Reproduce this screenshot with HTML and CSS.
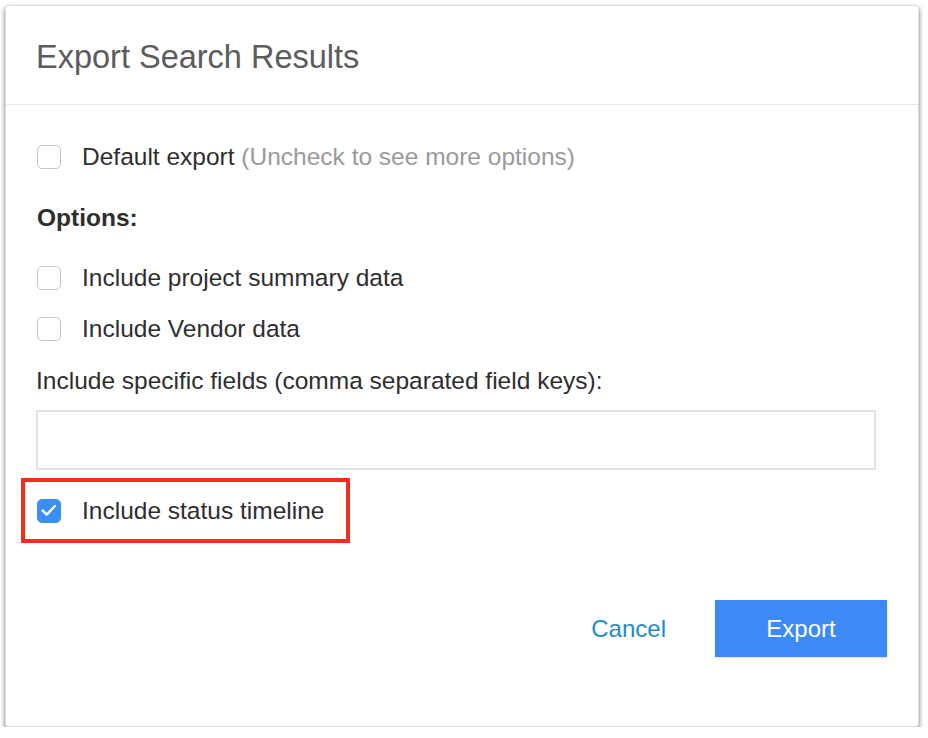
FILE: index.html
```html
<!DOCTYPE html>
<html lang="en">
<head>
    <meta charset="UTF-8">
    <title>Export Search Results</title>
    <link rel="stylesheet" href="styles.css">
</head>
<body>
    <div class="modal">
        <div class="modal-header">
            <h1>Export Search Results</h1>
        </div>
        <form class="modal-body">
            <label class="check-row first">
                <span class="check"></span>
                <span>Default export <span class="muted">(Uncheck to see more options)</span></span>
            </label>
            <div class="section-title">Options:</div>
            <label class="check-row">
                <span class="check"></span>
                <span>Include project summary data</span>
            </label>
            <label class="check-row tight">
                <span class="check"></span>
                <span>Include Vendor data</span>
            </label>
            <div class="field-label">Include specific fields (comma separated field keys):</div>
            <input type="text" class="field-input">
            <div class="highlight">
                <label class="check-row">
                    <span class="check checked">
                        <svg width="24" height="24" viewBox="0 0 24 24"><path d="M5 11.5 L9.5 16 L18.5 6.5" fill="none" stroke="#fff" stroke-width="2.6" stroke-linecap="round" stroke-linejoin="round"/></svg>
                    </span>
                    <span>Include status timeline</span>
                </label>
            </div>
            <div class="modal-footer">
                <button type="button" class="btn-link">Cancel</button>
                <button type="button" class="btn-primary">Export</button>
            </div>
        </form>
    </div>
</body>
</html>
```

FILE: styles.css
```css
* {
    margin: 0;
    padding: 0;
    box-sizing: border-box;
}

body {
    font-family: "Liberation Sans", Arial, sans-serif;
    background-color: #fff;
    color: #2e2e2e;
}

.modal {
    margin: 5px 0 0 5px;
    width: 914px;
    height: 722px;
    background-color: #fff;
    border: 1px solid #dcdcdc;
    border-radius: 3px;
    box-shadow: 0 3px 5px rgba(0, 0, 0, 0.55);
}

.modal-header {
    height: 99px;
    padding-left: 30px;
    display: flex;
    align-items: center;
    border-bottom: 1px solid #e8e8e8;
}

h1 {
    font-size: 32.5px;
    font-weight: normal;
    color: #5c5c5c;
    margin-top: 4px;
}

.modal-body {
    padding: 37px 42px 0 30px;
    display: flex;
    flex-direction: column;
    font-size: 24.5px;
}

.check-row {
    display: flex;
    align-items: center;
    gap: 21px;
    height: 30px;
    line-height: 30px;
    margin-top: 30px;
}

.check-row.first {
    margin-top: 0;
}

.check-row.tight {
    margin-top: 21px;
}

.check {
    width: 24px;
    height: 24px;
    margin-left: 1px;
    border: 1px solid #c6c6c6;
    border-radius: 5px;
    background-color: #fff;
    display: flex;
    align-items: center;
    justify-content: center;
    flex-shrink: 0;
}

.check.checked {
    background-color: #3a8ff7;
    border-color: #3a8ff7;
}

.muted {
    color: #9a9a9a;
}

.section-title {
    font-weight: bold;
    height: 30px;
    line-height: 30px;
    margin-top: 31px;
    margin-left: 1px;
}

.field-label {
    height: 30px;
    line-height: 30px;
    margin-top: 22px;
}

.field-input {
    margin-top: 14px;
    height: 60px;
    width: 100%;
    border: 2px solid #e3e3e3;
    outline: none;
    font-size: 24px;
}

.highlight {
    margin-top: 8px;
    margin-left: -15px;
    width: 329px;
    height: 65px;
    border: 4px solid #f52d1f;
    padding: 14px 0 0 11px;
}

.highlight .check-row {
    margin-top: 0;
}

.modal-footer {
    margin-top: 57px;
    margin-right: -11px;
    display: flex;
    justify-content: flex-end;
    align-items: center;
    gap: 49px;
}

.btn-link {
    background: none;
    border: none;
    font-family: inherit;
    font-size: 24px;
    color: #1f8bd0;
    cursor: pointer;
}

.btn-primary {
    width: 172px;
    height: 57px;
    background-color: #3d8af7;
    border: none;
    font-family: inherit;
    font-size: 24px;
    color: #fff;
    cursor: pointer;
    box-shadow: 0 1px 2px rgba(0, 0, 0, 0.15);
}
```
